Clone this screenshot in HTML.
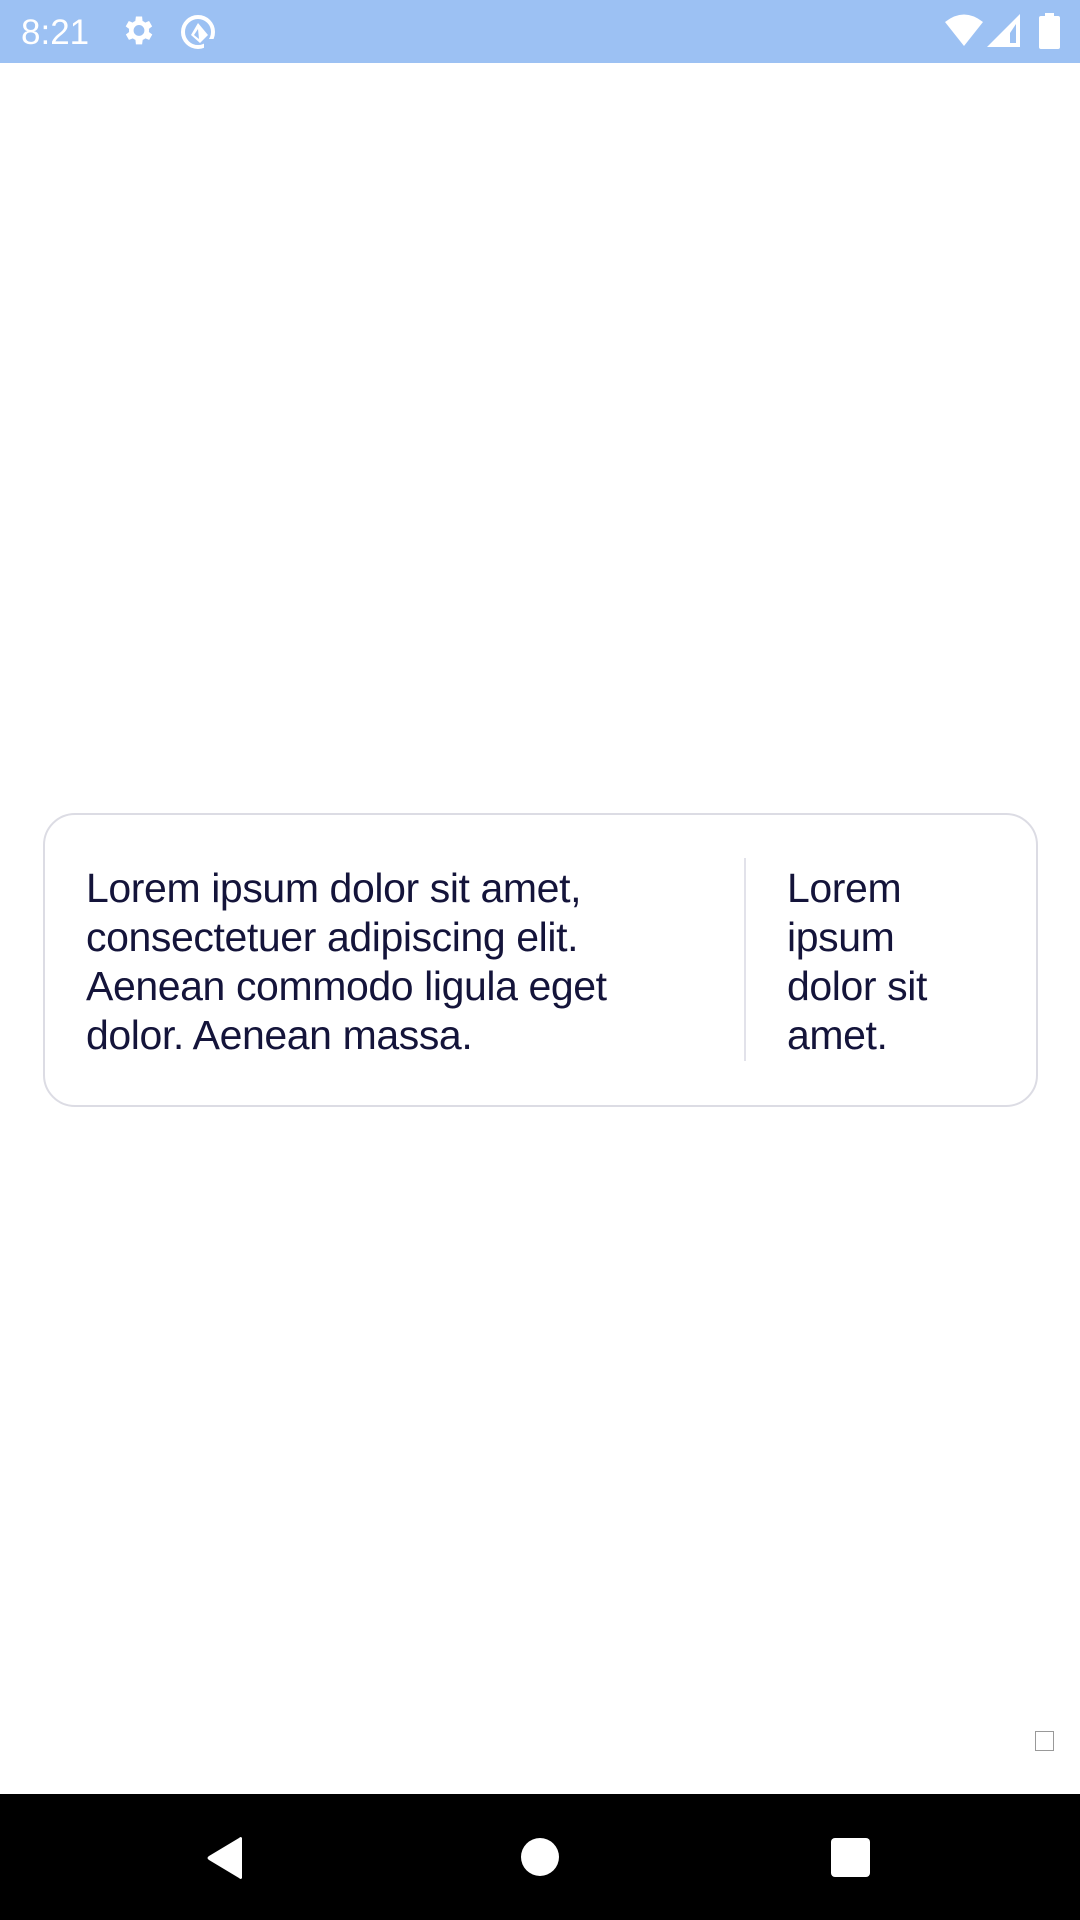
<!DOCTYPE html>
<html><head><meta charset="utf-8"><style>
html,body{margin:0;padding:0;width:1080px;height:1920px;background:#fff;overflow:hidden;position:relative;font-family:"Liberation Sans",sans-serif}
.sb{position:absolute;left:0;top:0;width:1080px;height:63px;background:#9cc1f3}
.time{position:absolute;left:21px;top:13px;color:#fff;font-size:35px;line-height:40px}
.card{position:absolute;left:43px;top:813px;width:995px;height:294px;border:2px solid #dcdce4;border-radius:32px;box-sizing:border-box}
.t{position:absolute;color:#14143a;font-size:41px;line-height:49px;letter-spacing:-0.4px;white-space:nowrap}
.div{position:absolute;left:744px;top:858px;width:2px;height:203px;background:#e2e2ea}
.nav{position:absolute;left:0;top:1794px;width:1080px;height:126px;background:#000}
.sq{position:absolute;left:1035px;top:1731px;width:19px;height:20px;border:1.5px solid #999;box-sizing:border-box}
</style></head><body>
<div class="sb">
<div class="time">8:21</div>
<svg style="position:absolute;left:122px;top:15px" width="34" height="34" viewBox="2 2 22 22"><path fill="#fff" d="M19.4 13a7.5 7.5 0 0 0 0-2l2.1-1.6-2-3.5-2.5 1a7 7 0 0 0-1.700-1L15 3h-4l-.4 2.9a7 7 0 0 0-1.7 1l-2.5-1-2 3.5L6.6 11a7.5 7.5 0 0 0 0 2l-2.1 1.6 2 3.5 2.5-1a7 7 0 0 0 1.7 1L11 21h4l.4-2.9a7 7 0 0 0 1.7-1l2.5 1 2-3.5zM13 15.5a3.5 3.5 0 1 1 0-7 3.5 3.5 0 0 1 0 7z"/></svg>
<svg style="position:absolute;left:178px;top:13px" width="40" height="38" viewBox="0 0 40 38"><circle cx="20" cy="19" r="15" fill="none" stroke="#fff" stroke-width="4"/><path d="M20 10 L13 22 L22 30 L30 22 Z" fill="#fff"/><path d="M20 16 L16 22 L21 26 Z" fill="#9cc1f3"/><rect x="26" y="26" width="10" height="10" fill="#9cc1f3"/></svg>
<svg style="position:absolute;left:944px;top:13px" width="40" height="34" viewBox="0 0 40 34"><path d="M1 9 Q20 -6 39 9 L20 33 Z" fill="#fff"/></svg>
<svg style="position:absolute;left:987px;top:14px" width="34" height="34" viewBox="0 0 34 34"><path d="M33 0 V33 H0 Z" fill="#fff"/><path d="M29 10 V29 H23 V19 Z" fill="#9cc1f3"/></svg>
<svg style="position:absolute;left:1039px;top:13px" width="21" height="36" viewBox="0 0 21 36"><rect x="6" y="0" width="9" height="4" fill="#fff"/><rect x="0" y="3" width="21" height="33" rx="2" fill="#fff"/></svg>
</div>
<div class="card"></div>
<div class="t" style="left:86px;top:864px">Lorem ipsum dolor sit amet,<br>consectetuer adipiscing elit.<br>Aenean commodo ligula eget<br>dolor. Aenean massa.</div>
<div class="div"></div>
<div class="t" style="left:787px;top:864px">Lorem<br>ipsum<br>dolor sit<br>amet.</div>
<div class="sq"></div>
<div class="nav">
<svg style="position:absolute;left:205px;top:42px" width="40" height="44" viewBox="0 0 40 44"><path d="M37 2 V42 Q36 44 34 42 L4 24 Q1 22 4 20 L34 2 Q36 0 37 2Z" fill="#fff"/></svg>
<div style="position:absolute;left:521px;top:44px;width:38px;height:38px;border-radius:50%;background:#fff"></div>
<div style="position:absolute;left:831px;top:44px;width:39px;height:39px;border-radius:4px;background:#fff"></div>
</div>
</body></html>
